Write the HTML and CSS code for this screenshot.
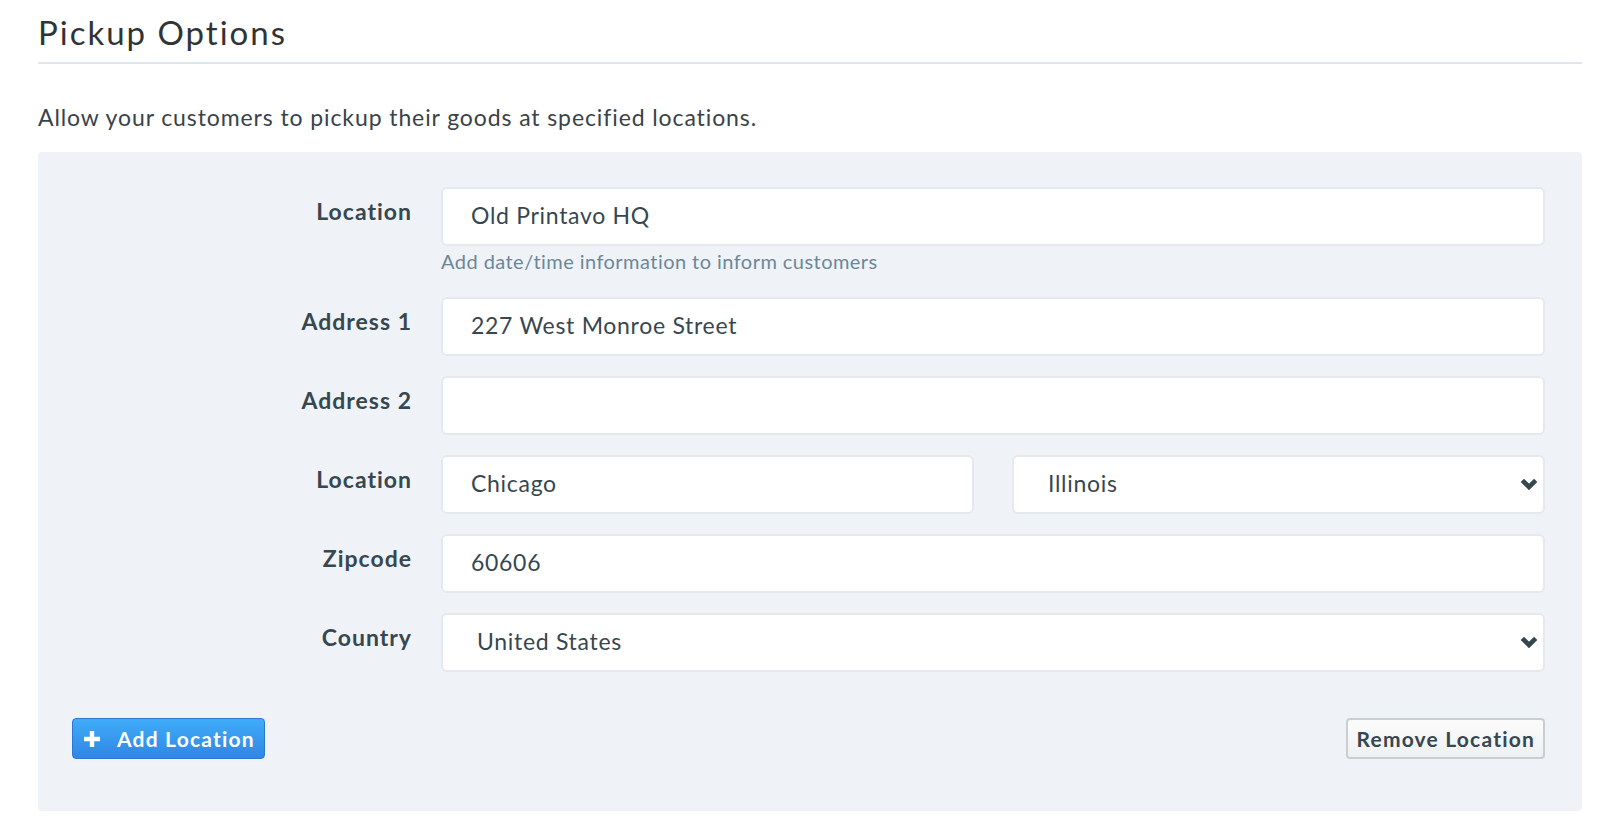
FILE: index.html
```html
<!DOCTYPE html>
<html lang="en">
<head>
<meta charset="UTF-8">
<meta name="viewport" content="width=device-width, initial-scale=1.0">
<title>Pickup Options</title>
<link rel="stylesheet" href="styles.css">
</head>
<body>
<div class="page">
  <h2 class="section-title">Pickup Options</h2>
  <p class="intro">Allow your customers to pickup their goods at specified locations.</p>

  <div class="panel">
    <div class="form-grid">
      <label class="field-label">Location</label>
      <div class="field">
        <input type="text" class="text-input" value="Old Printavo HQ">
        <div class="hint">Add date/time information to inform customers</div>
      </div>

      <label class="field-label">Address 1</label>
      <div class="field">
        <input type="text" class="text-input" value="227 West Monroe Street">
      </div>

      <label class="field-label">Address 2</label>
      <div class="field">
        <input type="text" class="text-input" value="">
      </div>

      <label class="field-label">Location</label>
      <div class="field split">
        <input type="text" class="text-input" value="Chicago">
        <div class="select-wrap">
          <select class="select-input">
            <option>Illinois</option>
          </select>
          <svg class="chevron" width="18" height="12" viewBox="0 0 18 12"><path d="M2.3 2.3 L9 9 L15.7 2.3" fill="none" stroke="#37474f" stroke-width="4.6"/></svg>
        </div>
      </div>

      <label class="field-label">Zipcode</label>
      <div class="field">
        <input type="text" class="text-input" value="60606">
      </div>

      <label class="field-label">Country</label>
      <div class="field">
        <div class="select-wrap">
          <select class="select-input">
            <option>United States</option>
          </select>
          <svg class="chevron" width="18" height="12" viewBox="0 0 18 12"><path d="M2.3 2.3 L9 9 L15.7 2.3" fill="none" stroke="#37474f" stroke-width="4.6"/></svg>
        </div>
      </div>
    </div>

    <div class="actions">
      <button class="btn btn-primary">
        <svg class="plus" width="18" height="18" viewBox="0 0 18 18"><path d="M9 1 V17 M1 9 H17" stroke="#fff" stroke-width="4.4"/></svg>
        Add Location
      </button>
      <button class="btn btn-default">Remove Location</button>
    </div>
  </div>
</div>
</body>
</html>
```

FILE: styles.css
```css
body {
  font-family: Lato, "Open Sans", sans-serif;
  color: #37474f;
  background-color: white;
  margin: 0;
  padding: 0;
}
.page {
  padding: 11px 42px 0 38px;
}
.section-title {
  margin: 0;
  padding-bottom: 9px;
  font-size: 33px;
  font-weight: 400;
  line-height: 42px;
  letter-spacing: 2px;
  color: #2f3437;
  border-bottom: 2px solid #dfe6ec;
}
.intro {
  margin: 39px 0 21px;
  font-size: 23px;
  line-height: 28px;
  letter-spacing: 0.9px;
  color: #3a4348;
}
.panel {
  background-color: #eff3f8;
  border-radius: 4px;
  padding: 35px 37px 52px 34px;
}
.form-grid {
  display: grid;
  grid-template-columns: 340px 1fr;
  column-gap: 29px;
  row-gap: 20px;
}
.field-label {
  text-align: right;
  font-size: 23px;
  font-weight: 700;
  line-height: 28px;
  letter-spacing: 1px;
  padding-top: 10px;
  color: #37474f;
}
.split {
  display: grid;
  grid-template-columns: 1fr 1fr;
  column-gap: 38px;
}
.text-input,
.select-input {
  display: block;
  width: 100%;
  height: 59px;
  box-sizing: border-box;
  border: 2px solid #e4e9ee;
  border-radius: 6px;
  background-color: white;
  font-family: Lato, "Open Sans", sans-serif;
  font-size: 23px;
  letter-spacing: 0.7px;
  color: #37474f;
  padding: 0 28px 3px;
  outline: none;
}
.select-input {
  appearance: none;
  -webkit-appearance: none;
  padding-left: 34px;
}
.select-wrap {
  position: relative;
}
.chevron {
  position: absolute;
  right: 7px;
  top: 23px;
  pointer-events: none;
}
.hint {
  margin: 3px 0 4px;
  font-size: 20px;
  line-height: 24px;
  letter-spacing: 0.45px;
  color: #6c8796;
}
.actions {
  display: flex;
  justify-content: space-between;
  align-items: center;
  margin-top: 46px;
}
.btn {
  display: flex;
  align-items: center;
  height: 41px;
  box-sizing: border-box;
  border-radius: 4px;
  font-family: Lato, "Open Sans", sans-serif;
  font-size: 21px;
  font-weight: 700;
  letter-spacing: 1.2px;
  cursor: pointer;
}
.btn-primary {
  padding: 0 9px 0 10px;
  color: white;
  border: 1px solid #2b78d2;
  background: linear-gradient(#40acf9, #2f86e4);
}
.plus {
  margin-right: 16px;
}
.btn-default {
  padding: 0 8px;
  color: #37474f;
  border: 2px solid #c9ced3;
  background: linear-gradient(#fcfcfc, #eef0f2);
}
```
